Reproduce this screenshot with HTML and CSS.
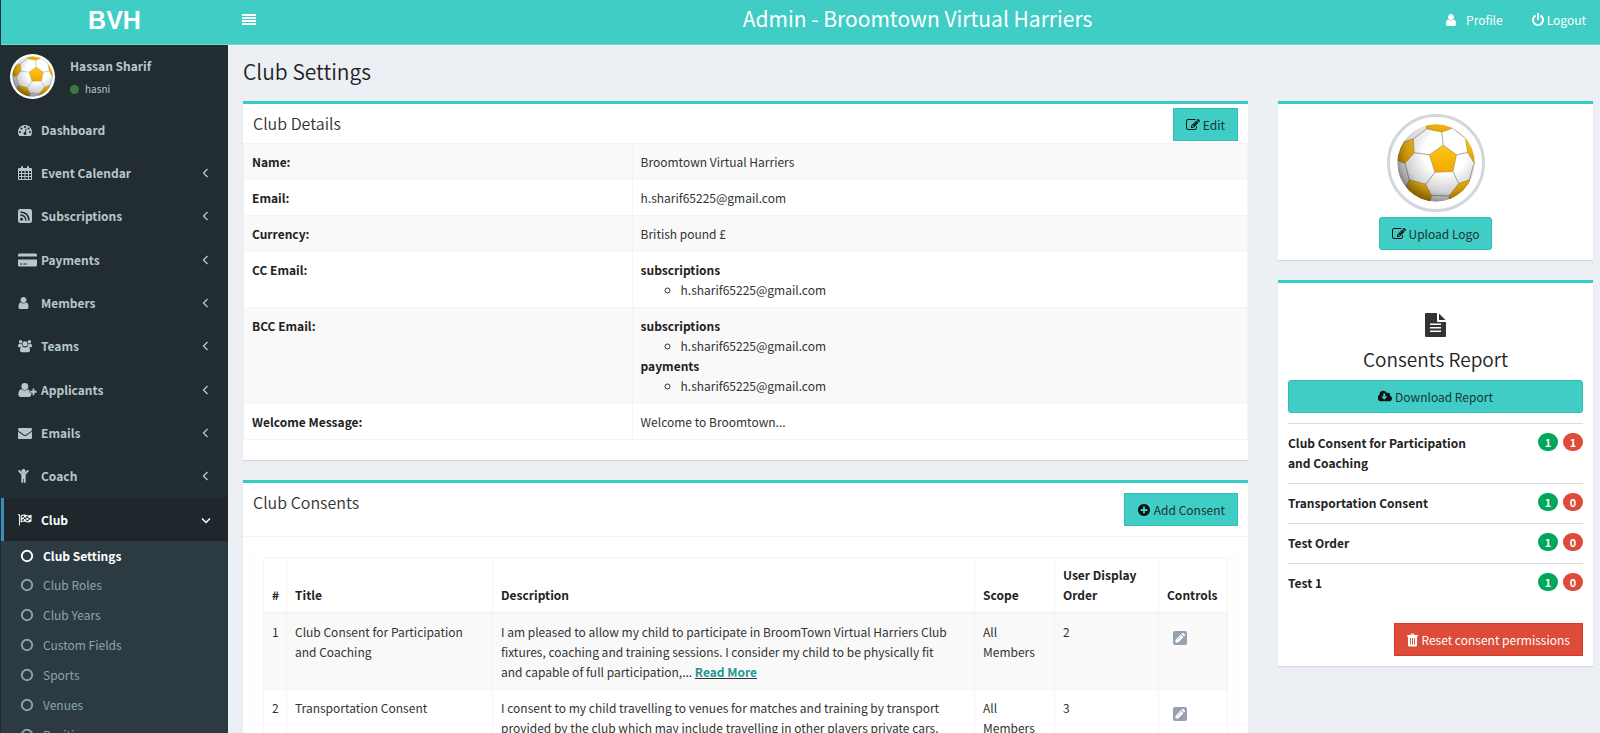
FILE: index.html
```html
<!DOCTYPE html>
<html lang="en">
<head>
	<meta charset="utf-8">
	<meta name="viewport" content="width=device-width, initial-scale=1">
	<title>Club Settings</title>
	<link rel="stylesheet" href="styles.css">
</head>
<body>

<!-- icons -->
<svg class="sprite" aria-hidden="true">
	<defs>
		<linearGradient id="gold" x1="0" y1="0" x2="0" y2="1">
			<stop offset="0" stop-color="#ffc61c"/>
			<stop offset="1" stop-color="#f0a800"/>
		</linearGradient>
		<radialGradient id="shade" cx="0.62" cy="0.36" r="0.68">
			<stop offset="0.4" stop-color="#000" stop-opacity="0"/>
			<stop offset="0.75" stop-color="#000" stop-opacity="0.18"/>
			<stop offset="1" stop-color="#000" stop-opacity="0.5"/>
		</radialGradient>
		<clipPath id="ballClip"><circle cx="118" cy="118" r="117"/></clipPath>
	</defs>
	<symbol id="ball" viewBox="0 0 236 236">
		<g clip-path="url(#ballClip)">
			<circle cx="118" cy="118" r="118" fill="#fff"/>
			<g fill="none" stroke="#a9a5a3" stroke-width="3">
				<path d="M140 64L135 24M98 93L52 87M180 93L215 86M169 144L187 180M115 146L87 182M104 216L157 218M49 45L90 14M168 12L210 45M24 119L37 169M232 122L219 169"/>
			</g>
			<g fill="url(#gold)" stroke="#a98a40" stroke-width="2">
				<path d="M98 93L140 64L180 93L169 144L115 146Z"/>
				<path d="M88 -4L90 14Q112 20 135 24Q152 20 168 12L160 -4Z"/>
				<path d="M20 55L49 45L52 87L24 119L-4 108Z"/>
				<path d="M206 36L214 86L236 122L244 60Z"/>
				<path d="M37 169L87 182L104 218L96 240L20 210Z"/>
				<path d="M219 169L187 180L157 219L160 240L230 200Z"/>
			</g>
			<circle cx="118" cy="118" r="118" fill="url(#shade)"/>
		</g>
	</symbol>
	<symbol id="lines" viewBox="0 0 14 14">
		<path d="M0 1h14v2H0zM0 4h14v2H0zM0 7h14v2H0zM0 10h14v2H0z"/>
	</symbol>
	<symbol id="user" viewBox="256 0 1280 1792">
		<path d="M1536 1399q0 109-62.500 187t-150.500 78h-854q-88 0-150.500-78t-62.500-187q0-85 8.500-160.500t31.500-152 58.500-131 94-89 134.500-34.500q131 128 313 128t313-128q76 0 134.500 34.500t94 89 58.500 131 31.500 152 8.500 160.500zm-256-887q0 159-112.500 271.500t-271.500 112.500-271.500-112.500-112.500-271.500 112.500-271.500 271.500-112.500 271.500 112.500 112.500 271.500z"/>
	</symbol>
	<symbol id="power" viewBox="128 0 1536 1792">
		<path d="M1664 896q0 156-61 298t-164 245-245 164-298 61-298-61-245-164-164-245-61-298q0-182 80.500-343t226.500-270q43-32 95.500-25t83.500 50q32 42 24.500 94.500t-49.500 84.500q-98 74-151.500 181t-53.500 228q0 104 40.500 198.500t109.500 163.500 163.500 109.500 198.500 40.500 198.500-40.500 163.500-109.500 109.500-163.500 40.500-198.500q0-121-53.500-228t-151.500-181q-42-32-49.500-84.500t24.500-94.500q31-43 84-50t95 25q146 109 226.500 270t80.500 343zm-640-768v640q0 52-38 90t-90 38-90-38-38-90v-640q0-52 38-90t90-38 90 38 38 90z"/>
	</symbol>
	<symbol id="gauge" viewBox="0 0 1792 1792">
		<path d="M384 1152q0-53-37.500-90.500t-90.500-37.500-90.500 37.500-37.500 90.500 37.500 90.500 90.500 37.500 90.500-37.500 37.500-90.500zm192-448q0-53-37.500-90.500t-90.500-37.500-90.500 37.500-37.500 90.500 37.500 90.500 90.500 37.500 90.500-37.500 37.500-90.500zm428 481l101-382q6-26-7.500-48.500t-38.500-29.500-48 6.500-30 39.500l-101 382q-60 5-107 43.500t-63 98.500q-20 77 20 146t117 89 146-20 89-117q16-60-6-117t-72-91zm660-33q0-53-37.500-90.500t-90.500-37.500-90.500 37.500-37.500 90.500 37.500 90.500 90.500 37.500 90.500-37.500 37.500-90.500zm-640-640q0-53-37.500-90.500t-90.500-37.500-90.500 37.500-37.500 90.500 37.500 90.500 90.500 37.500 90.500-37.500 37.500-90.500zm448 192q0-53-37.500-90.500t-90.500-37.500-90.500 37.500-37.500 90.500 37.500 90.500 90.500 37.500 90.500-37.500 37.500-90.500zm320 448q0 261-141 483-19 29-54 29h-1402q-35 0-54-29-141-221-141-483 0-182 71-348t191-286 286-191 348-71 348 71 286 191 191 286 71 348z"/>
	</symbol>
	<symbol id="calendar" viewBox="0 0 14 14">
		<path fill-rule="evenodd" d="M1 2h2V1q0-1 1-1t1 1v1h4V1q0-1 1-1t1 1v1h2q1 0 1 1v10q0 1-1 1H1q-1 0-1-1V3q0-1 1-1zM1 5v2h2V5zM4 5v2h2.500V5zM7.500 5v2H10V5zM11 5v2h2V5zM1 8v2h2V8zM4 8v2h2.500V8zM7.500 8v2H10V8zM11 8v2h2V8zM1 11v2h2v-2zM4 11v2h2.500v-2zM7.500 11v2H10v-2zM11 11v2h2v-2z"/>
	</symbol>
	<symbol id="rss" viewBox="0 0 12 12">
		<path fill-rule="evenodd" d="M2 0h8q2 0 2 2v8q0 2-2 2H2q-2 0-2-2V2q0-2 2-2zM3 7.500a1.300 1.300 0 1 0 .01 0zM2 4.600v1.200q4 .2 4.200 4.200h1.200Q7.200 4.900 2 4.600zM2 2v1.200Q8.600 3.500 8.800 10H10Q9.800 2.200 2 2z"/>
	</symbol>
	<symbol id="card" viewBox="0 0 19 13">
		<path fill-rule="evenodd" d="M1.500 0h16Q19 0 19 1.500V3H0V1.500Q0 0 1.500 0zM0 6h19v5.500q0 1.500-1.500 1.500h-16Q0 13 0 11.500zM2 10v1h2.500v-1zM5.500 10v1H9v-1z"/>
	</symbol>
	<symbol id="users" viewBox="0 0 16 14">
		<circle cx="3" cy="2.200" r="2"/><circle cx="13" cy="2.200" r="2"/><circle cx="8" cy="4.500" r="2.900"/>
		<path d="M0 7.500Q0 4.300 1.500 4.500Q3 5.400 4.400 4.700Q4.600 6.300 5.500 7.300Q4 7.300 3 8.300H1.200Q0 8.300 0 7.500zM16 7.500Q16 4.300 14.500 4.500Q13 5.400 11.600 4.700Q11.400 6.300 10.500 7.300Q12 7.300 13 8.300H14.800Q16 8.300 16 7.500zM2.300 12Q2.300 7.600 5 7.600Q8 9.600 11 7.600Q13.700 7.600 13.700 12Q13.700 14 11.800 14H4.200Q2.300 14 2.300 12z"/>
	</symbol>
	<symbol id="userplus" viewBox="0 0 17 13">
		<circle cx="6" cy="3.200" r="3.200"/>
		<path d="M0 11Q0 6 3 5.800Q6 8 9 5.800Q10 6 10.300 6.800V9H12V11Q11.500 13 10 13H2Q0 13 0 11z"/>
		<path d="M11 7.300h2.200V5h1.700v2.300H17V9h-2.100v2.300h-1.700V9H11z"/>
	</symbol>
	<symbol id="mail" viewBox="0 128 1792 1536">
		<path d="M1792 710v794q0 66-47 113t-113 47h-1472q-66 0-113-47t-47-113v-794q44 49 101 87 362 246 497 345 57 42 92.500 65.500t94.500 48 110 24.500h2q51 0 110-24.500t94.500-48 92.500-65.500q170-123 498-345 57-39 100-87zm0-294q0 79-49 151t-122 123q-376 261-468 325-10 7-42.500 31t-54 38.500-52 32.500-57.500 27-50 9h-2q-23 0-50-9t-57.500-27-52-32.500-54-38.500-42.500-31q-91-64-262-182.500t-205-142.500q-62-42-117-115.500t-55-136.500q0-78 41.500-130t118.500-52h1472q65 0 112.500 47t47.500 113z"/>
	</symbol>
	<symbol id="child" viewBox="0 0 10 13">
		<circle cx="5" cy="2" r="2"/>
		<path d="M.3 1.200Q1 .6 1.600 1.200L4 4H6L8.400 1.200Q9 .6 9.700 1.200Q10.200 1.800 9.700 2.400L7 5.300V12Q7 13 6.200 13Q5.400 13 5.300 12V9H4.700V12Q4.600 13 3.800 13Q3 13 3 12V5.300L.3 2.400Q-.2 1.800 .3 1.200z"/>
	</symbol>
	<symbol id="flag" viewBox="0 0 15 13">
		<path fill-rule="evenodd" d="M1 0q1 0 1 1v11.500H1V1.800Q0 1.500 0 1Q0 0 1 0zM2.800 1.700Q6-.3 8.500 1Q11 2.300 14.500.8V8Q11 10 8.500 8.700Q6 7.500 2.800 9.400zM4 2.400V4.300Q5 3.600 6.300 3.500V1.700Q5 1.800 4 2.400zM6.300 3.500V5.500Q7.500 5.400 8.700 6V4Q7.500 3.400 6.300 3.500zM8.700 2.300V4Q10 4.600 11.200 4.500V2.700Q10 2.800 8.700 2.300zM11.200 4.500V6.400Q12.500 6.300 13.500 5.700V3.900Q12.500 4.400 11.200 4.500zM4 6.200V7.700Q5 7.200 6.300 7.100V5.500Q5 5.600 4 6.200zM8.700 6V7.700Q10 8.300 11.200 8.200V6.400Q10 6.500 8.700 6z"/>
	</symbol>
	<symbol id="left" viewBox="0 0 10 10"><path d="M6.500 1L2.500 5L6.500 9" fill="none" stroke="currentColor" stroke-width="1.300"/></symbol>
	<symbol id="down" viewBox="0 0 10 10"><path d="M1 3.500L5 7.500L9 3.500" fill="none" stroke="currentColor" stroke-width="1.500"/></symbol>
	<symbol id="ring" viewBox="0 0 14 14"><circle cx="7" cy="7" r="5.200" fill="none" stroke="currentColor" stroke-width="1.900"/></symbol>
	<symbol id="edit" viewBox="0 0 1792 1792">
		<path d="M888 1184l116-116-152-152-116 116v56h96v96h56zm440-720q-16-16-33 1l-350 350q-17 17-1 33t33-1l350-350q17-17 1-33zm80 594v190q0 119-84.500 203.500t-203.500 84.500h-832q-119 0-203.500-84.500t-84.500-203.500v-832q0-119 84.500-203.500t203.500-84.500h832q63 0 117 25 15 7 18 23 3 17-9 29l-49 49q-14 14-32 8-23-6-45-6h-832q-66 0-113 47t-47 113v832q0 66 47 113t113 47h832q66 0 113-47t47-113v-126q0-13 9-22l64-64q15-15 35-7t20 29zm-96-738l288 288-672 672h-288v-288zm444 132l-92 92-288-288 92-92q28-28 68-28t68 28l152 152q28 28 28 68t-28 68z"/>
	</symbol>
	<symbol id="pencil" viewBox="0 0 14 14">
		<rect width="14" height="14" rx="2"/>
		<path fill="#fff" d="M2.500 11.500V8.800L7.700 3.600L10.400 6.300L5.200 11.500zM8.400 2.900L9.200 2.100Q9.800 1.700 10.400 2.100L11.900 3.600Q12.300 4.200 11.900 4.800L11.100 5.600z"/>
		<path stroke="currentColor" stroke-width=".6" d="M4.200 8.800L7.900 5.100"/>
	</symbol>
	<symbol id="plus" viewBox="0 0 1792 1792">
		<path d="M1344 960v-128q0-26-19-45t-45-19h-256v-256q0-26-19-45t-45-19h-128q-26 0-45 19t-19 45v256h-256q-26 0-45 19t-19 45v128q0 26 19 45t45 19h256v256q0 26 19 45t45 19h128q26 0 45-19t19-45v-256h256q26 0 45-19t19-45zm320-64q0 209-103 385.500t-279.500 279.500-385.500 103-385.500-103-279.500-279.500-103-385.500 103-385.500 279.500-279.500 385.500-103 385.500 103 279.500 279.500 103 385.500z"/>
	</symbol>
	<symbol id="cloud" viewBox="0 256 1856 1408">
		<path d="M1216 928q0-14-9-23t-23-9h-224v-352q0-13-9.500-22.500t-22.500-9.500h-192q-13 0-22.500 9.500t-9.500 22.500v352h-224q-13 0-22.500 9.500t-9.500 22.500q0 14 9 23l352 352q9 9 23 9t23-9l351-351q10-12 10-24zm640 224q0 159-112.500 271.500t-271.500 112.500h-1088q-185 0-316.500-131.500t-131.500-316.500q0-130 70-240t188-165q-2-30-2-43 0-212 150-362t362-150q156 0 285.500 87t188.500 231q71-62 166-62 106 0 181 75t75 181q0 76-41 138 130 31 213.500 135.500t83.500 238.500z"/>
	</symbol>
	<symbol id="file" viewBox="0 0 21 24">
		<path fill-rule="evenodd" d="M1 0h11v8q0 1 1 1h8v14q0 1-1 1H1q-1 0-1-1V1q0-1 1-1zM5 10.500v1.500h11v-1.500zM5 14v1.500h11V14zM5 17.500V19h11v-1.500z"/>
		<path d="M14 .5V7h6.500z"/>
	</symbol>
	<symbol id="trash" viewBox="0 0 11 13">
		<path fill-rule="evenodd" d="M3.500 1.500L4 .3Q4.200 0 4.500 0h2q.3 0 .5.300l.5 1.200h3q.5 0 .5.500v1h-1v8.500q0 1.500-1.200 1.500H2.200Q1 13 1 11.500V3H0V2q0-.5.500-.5zM4.500 1.500h2L6.200 1H4.800zM3 4.500V11h.9V4.500zM5 4.500V11h.9V4.500zM7 4.500V11h.9V4.500z"/>
	</symbol>
</svg>

<div class="wrapper">
	<header class="main-header">
		<a href="#" class="logo">BVH</a>
		<nav class="navbar">
			<button type="button" class="toggle" aria-label="Toggle navigation"><svg class="icon"><use href="#lines"/></svg></button>
			<div class="nav-title">Admin - Broomtown Virtual Harriers</div>
			<div class="nav-links">
				<a href="#" class="profile"><svg class="icon"><use href="#user"/></svg>Profile</a>
				<a href="#"><svg class="icon"><use href="#power"/></svg>Logout</a>
			</div>
		</nav>
	</header>

	<div class="page">
		<aside class="sidebar">
			<div class="user-panel">
				<svg class="avatar" role="img" aria-label="User"><use href="#ball"/></svg>
				<div>
					<p class="user-name">Hassan Sharif</p>
					<a href="#" class="status"><span class="dot"></span>hasni</a>
				</div>
			</div>
			<ul class="menu">
				<li><a href="#"><svg class="icon"><use href="#gauge"/></svg><span>Dashboard</span></a></li>
				<li><a href="#"><svg class="icon"><use href="#calendar"/></svg><span>Event Calendar</span><svg class="arrow"><use href="#left"/></svg></a></li>
				<li><a href="#"><svg class="icon"><use href="#rss"/></svg><span>Subscriptions</span><svg class="arrow"><use href="#left"/></svg></a></li>
				<li><a href="#"><svg class="icon wide"><use href="#card"/></svg><span>Payments</span><svg class="arrow"><use href="#left"/></svg></a></li>
				<li><a href="#"><svg class="icon narrow"><use href="#user"/></svg><span>Members</span><svg class="arrow"><use href="#left"/></svg></a></li>
				<li><a href="#"><svg class="icon"><use href="#users"/></svg><span>Teams</span><svg class="arrow"><use href="#left"/></svg></a></li>
				<li><a href="#"><svg class="icon wide"><use href="#userplus"/></svg><span>Applicants</span><svg class="arrow"><use href="#left"/></svg></a></li>
				<li><a href="#"><svg class="icon"><use href="#mail"/></svg><span>Emails</span><svg class="arrow"><use href="#left"/></svg></a></li>
				<li><a href="#"><svg class="icon narrow"><use href="#child"/></svg><span>Coach</span><svg class="arrow"><use href="#left"/></svg></a></li>
				<li class="active">
					<a href="#"><svg class="icon"><use href="#flag"/></svg><span>Club</span><svg class="arrow"><use href="#down"/></svg></a>
					<ul class="submenu">
						<li class="current"><a href="#"><svg class="icon"><use href="#ring"/></svg>Club Settings</a></li>
						<li><a href="#"><svg class="icon"><use href="#ring"/></svg>Club Roles</a></li>
						<li><a href="#"><svg class="icon"><use href="#ring"/></svg>Club Years</a></li>
						<li><a href="#"><svg class="icon"><use href="#ring"/></svg>Custom Fields</a></li>
						<li><a href="#"><svg class="icon"><use href="#ring"/></svg>Sports</a></li>
						<li><a href="#"><svg class="icon"><use href="#ring"/></svg>Venues</a></li>
						<li><a href="#"><svg class="icon"><use href="#ring"/></svg>Positions</a></li>
					</ul>
				</li>
			</ul>
		</aside>

		<main class="content">
			<h1>Club Settings</h1>
			<div class="columns">
				<div class="col">
					<section class="box">
						<div class="box-header slim">
							<h2>Club Details</h2>
							<button type="button" class="btn flat"><svg class="icon"><use href="#edit"/></svg>Edit</button>
						</div>
						<table class="table details">
							<tr><th>Name:</th><td>Broomtown Virtual Harriers</td></tr>
							<tr><th>Email:</th><td>h.sharif65225@gmail.com</td></tr>
							<tr><th>Currency:</th><td>British pound £</td></tr>
							<tr>
								<th>CC Email:</th>
								<td>
									<b>subscriptions</b>
									<ul><li>h.sharif65225@gmail.com</li></ul>
								</td>
							</tr>
							<tr>
								<th>BCC Email:</th>
								<td>
									<b>subscriptions</b>
									<ul><li>h.sharif65225@gmail.com</li></ul>
									<b>payments</b>
									<ul><li>h.sharif65225@gmail.com</li></ul>
								</td>
							</tr>
							<tr><th>Welcome Message:</th><td>Welcome to Broomtown...</td></tr>
						</table>
					</section>

					<section class="box">
						<div class="box-header">
							<h2>Club Consents</h2>
							<button type="button" class="btn flat"><svg class="icon"><use href="#plus"/></svg>Add Consent</button>
						</div>
						<div class="box-body">
							<div class="panel">
								<table class="table consents">
									<colgroup>
										<col class="c-num"><col class="c-title"><col><col class="c-scope"><col class="c-order"><col class="c-controls">
									</colgroup>
									<thead>
										<tr><th>#</th><th>Title</th><th>Description</th><th>Scope</th><th>User Display Order</th><th>Controls</th></tr>
									</thead>
									<tbody>
										<tr>
											<td>1</td>
											<td class="long">Club Consent for Participation and Coaching</td>
											<td class="long">I am pleased to allow my child to participate in BroomTown Virtual Harriers Club fixtures, coaching and training sessions. I consider my child to be physically fit and capable of full participation,... <a href="#" class="more">Read More</a></td>
											<td>All Members</td>
											<td>2</td>
											<td><a href="#" class="control" aria-label="Edit consent"><svg class="icon"><use href="#pencil"/></svg></a></td>
										</tr>
										<tr>
											<td>2</td>
											<td class="long">Transportation Consent</td>
											<td class="long">I consent to my child travelling to venues for matches and training by transport provided by the club which may include travelling in other players private cars.</td>
											<td>All Members</td>
											<td>3</td>
											<td><a href="#" class="control" aria-label="Edit consent"><svg class="icon"><use href="#pencil"/></svg></a></td>
										</tr>
									</tbody>
								</table>
							</div>
						</div>
					</section>
				</div>

				<div class="col">
					<section class="box side">
						<div class="club-logo"><svg role="img" aria-label="Club logo"><use href="#ball"/></svg></div>
						<button type="button" class="btn"><svg class="icon"><use href="#edit"/></svg>Upload Logo</button>
					</section>

					<section class="box side">
						<svg class="report-icon"><use href="#file"/></svg>
						<h3>Consents Report</h3>
						<button type="button" class="btn block"><svg class="icon"><use href="#cloud"/></svg>Download Report</button>
						<ul class="report">
							<li><span class="label">Club Consent for Participation and Coaching</span><span class="badge green">1</span><span class="badge red">1</span></li>
							<li><span class="label">Transportation Consent</span><span class="badge green">1</span><span class="badge red">0</span></li>
							<li><span class="label">Test Order</span><span class="badge green">1</span><span class="badge red">0</span></li>
							<li><span class="label">Test 1</span><span class="badge green">1</span><span class="badge red">0</span></li>
						</ul>
						<button type="button" class="btn flat danger"><svg class="icon"><use href="#trash"/></svg>Reset consent permissions</button>
					</section>
				</div>
			</div>
		</main>
	</div>
</div>

</body>
</html>
```
FILE: styles.css
```css
* { box-sizing: border-box; }

body {
	margin: 0;
	height: 100vh;
	overflow: hidden;
	font-family: "Source Sans Pro", "Noto Sans CJK SC", sans-serif;
	font-size: 12px;
	line-height: 20px;
	color: #333;
	background: #ecf0f5;
}

h1, h2, h3, p, ul { margin: 0; padding: 0; }
ul { list-style: none; }
a { color: inherit; text-decoration: none; }
button { font: inherit; cursor: pointer; }

.sprite { position: absolute; width: 0; height: 0; }
.icon { width: 14px; height: 14px; fill: currentColor; flex: none; }

.wrapper {
	display: flex;
	flex-direction: column;
	height: 100%;
	border-left: 1px solid #17303a;
}

/* header */
.main-header {
	display: flex;
	flex: none;
	height: 45px;
	background: #3fcdc5;
	border-bottom: 1px solid #6fd9d3;
	color: #fff;
}

.logo {
	width: 227px;
	flex: none;
	font: bold 25px/40px "Liberation Sans", Arial, sans-serif;
	text-align: center;
}

.navbar {
	flex: 1;
	display: grid;
	grid-template-columns: 1fr auto 1fr;
	align-items: center;
	padding: 0 7px 4px 14px;
}

.toggle {
	justify-self: start;
	display: flex;
	padding: 0;
	border: 0;
	background: none;
	color: #fff;
}

.nav-title {
	padding-bottom: 4px;
	font-size: 21px;
	line-height: 34px;
}

.nav-links {
	justify-self: end;
	display: flex;
	gap: 28px;
	padding-right: 7px;
}

.nav-links a {
	display: flex;
	align-items: center;
	gap: 2px;
}

.nav-links .profile { gap: 8px; }

/* sidebar */
.page {
	display: flex;
	flex: 1;
	min-height: 0;
}

.sidebar {
	width: 227px;
	flex: none;
	overflow: hidden;
	background: #222d32;
	color: #b8c7ce;
}

.user-panel {
	display: flex;
	gap: 15px;
	padding: 9px;
}

.avatar {
	width: 45px;
	height: 45px;
	padding: 2px;
	border-radius: 50%;
	background: #fff;
}

.user-name {
	padding: 2px 0 3px;
	font-weight: bold;
}

.status {
	display: flex;
	align-items: center;
	gap: 6px;
	font-size: 10px;
}

.dot {
	width: 9px;
	height: 9px;
	border-radius: 50%;
	background: #3c763d;
}

.menu > li > a {
	display: flex;
	align-items: center;
	height: 43px;
	padding: 0 17px 0 14px;
	border-left: 3px solid transparent;
	font-weight: bold;
}

.menu > li:nth-child(3n) { padding-bottom: 1px; }

.menu > li > a > .icon { margin-right: 9px; }
.menu > li > a > .wide { width: 19px; margin-right: 4px; }
.menu > li > a > .narrow { width: 11px; margin-right: 12px; }
.menu > li > a > span { flex: 1; }
.arrow { width: 10px; height: 10px; }

.menu > .active > a {
	border-left-color: #3c8dbc;
	background: #1e282c;
	color: #fff;
}

.submenu {
	background: #2c3b41;
	color: #8aa4af;
}

.submenu a {
	display: flex;
	align-items: center;
	gap: 9px;
	height: 30px;
	padding-left: 19px;
}

.submenu .current {
	height: 29px;
	color: #fff;
	font-weight: bold;
}

/* content */
.content {
	flex: 1;
	overflow: hidden;
	padding: 10px 7px 0 15px;
}

h1 {
	font-size: 21px;
	font-weight: 350;
	line-height: 32px;
	color: #222;
}

.columns {
	display: grid;
	grid-template-columns: 67fr 21fr;
	gap: 30px;
	padding-top: 14px;
	align-items: start;
}

.box {
	margin-bottom: 20px;
	padding-bottom: 20px;
	border-top: 3px solid #34ccc4;
	background: #fff;
	box-shadow: 0 1px 1px rgba(0, 0, 0, 0.1);
}

.box-header {
	display: flex;
	justify-content: space-between;
	padding: 10px;
}

.box-header.slim { padding: 4px 10px 2px; }
.box-header.slim h2 { padding-top: 6px; }

h2 {
	font-size: 16px;
	font-weight: 350;
	line-height: 18px;
	color: #333;
}

.btn {
	display: inline-flex;
	align-items: center;
	justify-content: center;
	gap: 3px;
	height: 33px;
	padding: 0 12px;
	border: 1px solid #30beb6;
	border-radius: 3px;
	background: #3fcdc5;
	color: #1c3533;
}

.btn .icon { color: #111; }
.flat { border-radius: 0; }
.block { width: 100%; }

.danger {
	border-color: #d73925;
	background: #dd4b39;
	color: #fff;
}

.danger .icon {
	width: 11px;
	color: #fff;
}

/* tables */
.table {
	width: 100%;
	border-collapse: collapse;
	table-layout: fixed;
}

.table th,
.table td {
	padding: 8px 8px 7px;
	border: 1px solid #f4f4f4;
	text-align: left;
	vertical-align: top;
}

.table th { color: #222; }
.details th { width: 38.7%; }
.details b { display: block; color: #222; }

.details ul {
	padding-left: 40px;
	list-style: circle;
}

.details tr:nth-child(odd),
.consents tbody tr:nth-child(odd) { background: #f9f9f9; }

.box-body {
	padding: 10px;
	border-top: 1px solid #f4f4f4;
}

.panel {
	padding: 10px 9px;
	border: solid #fafafa;
	border-width: 0 1px;
}

.consents thead th {
	padding-top: 7px;
	border-bottom-width: 2px;
	vertical-align: bottom;
}

.consents .long { padding-right: 20px; }

.c-num { width: 23px; }
.c-title { width: 206px; }
.c-scope { width: 80px; }
.c-order { width: 104px; }
.c-controls { width: 69px; }

.more {
	color: #26968f;
	font-weight: bold;
	text-decoration: underline #333;
}

.control {
	display: flex;
	padding: 9px 6px;
	color: #97a0b3;
}

/* right column */
.side {
	display: flex;
	flex-direction: column;
	align-items: center;
	padding: 10px;
}

.club-logo {
	width: 98px;
	height: 98px;
	margin-bottom: 5px;
	padding: 7px;
	border: 3px solid #d2d6de;
	border-radius: 50%;
}

.club-logo svg {
	display: block;
	width: 100%;
	height: 100%;
}

.report-icon {
	width: 21px;
	height: 24px;
	margin-top: 20px;
	fill: #333;
}

h3 {
	padding: 9px 0 8px;
	font-size: 19px;
	font-weight: 350;
	line-height: 26px;
	color: #222;
}

.report {
	width: 100%;
	padding: 10px 0 20px;
}

.report li {
	display: flex;
	gap: 5px;
	padding: 9px 0 10px;
	border-top: 1px solid #ddd;
}

.label {
	width: 66%;
	margin-right: auto;
	font-weight: bold;
	color: #222;
}

.badge {
	width: 20px;
	height: 18px;
	border-radius: 9px;
	color: #fff;
	font-size: 11px;
	font-weight: bold;
	line-height: 18px;
	text-align: center;
}

.green { background: #00a65a; }
.red { background: #dd4b39; }
.side .danger { align-self: flex-end; }
```
